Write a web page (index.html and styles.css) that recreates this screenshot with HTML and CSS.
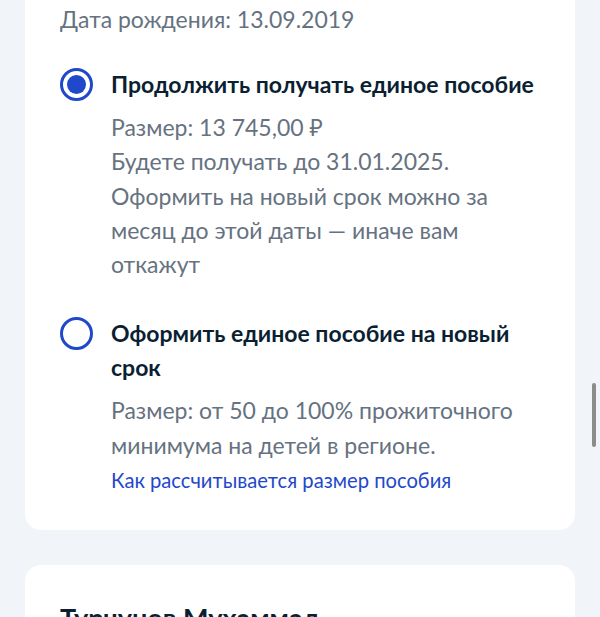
FILE: index.html
```html
<!DOCTYPE html>
<html lang="ru">
  <head>
    <meta charset="UTF-8" />
    <meta name="viewport" content="width=device-width, initial-scale=1.0" />
    <title>Единое пособие</title>
    <link rel="stylesheet" href="styles.css">
  </head>
  <body>
    <div class="page">
      <div class="card">
        <div class="birth">Дата рождения: 13.09.2019</div>

        <label class="option">
          <span class="radio radio-checked"></span>
          <span class="option-body">
            <span class="option-title">Продолжить получать единое пособие</span>
            <span class="option-desc">
              Размер: 13 745,00 ₽<br />
              Будете получать до 31.01.2025.<br />
              Оформить на новый срок можно за месяц до этой даты — иначе вам откажут
            </span>
          </span>
        </label>

        <label class="option">
          <span class="radio"></span>
          <span class="option-body">
            <span class="option-title">Оформить единое пособие на новый срок</span>
            <span class="option-desc">
              Размер: от 50 до 100% прожиточного минимума на детей в регионе.
            </span>
            <a class="option-link" href="#">Как рассчитывается размер пособия</a>
          </span>
        </label>
      </div>

      <div class="card card-next">
        <div class="person">Турчунов Мухаммад</div>
      </div>
    </div>
    <div class="scrollbar"></div>
  </body>
</html>
```

FILE: styles.css
```css
body {
  font-family: Lato, "Noto Sans", sans-serif;
  margin: 0;
  background-color: #f1f4f8;
  overflow: hidden;
}

.page {
  display: flex;
  flex-direction: column;
  gap: 35px;
  padding: 0 25px;
  margin-top: -20px;
}

.card {
  background-color: #fff;
  border-radius: 16px;
  padding: 22px 35px 33px;
}

.birth {
  font-size: 23px;
  line-height: 34px;
  color: #66727f;
}

.option {
  display: grid;
  grid-template-columns: 33px 1fr;
  column-gap: 18px;
  margin-top: 31px;
  cursor: pointer;
}

.option + .option {
  margin-top: 35px;
}

.radio {
  width: 33px;
  height: 33px;
  box-sizing: border-box;
  border: 3px solid #1f48cb;
  border-radius: 50%;
  margin-top: 1px;
  position: relative;
}

.radio-checked::after {
  content: "";
  position: absolute;
  top: 4px;
  left: 4px;
  width: 19px;
  height: 19px;
  border-radius: 50%;
  background-color: #1f48cb;
}

.option-body {
  display: flex;
  flex-direction: column;
  align-items: flex-start;
}

.option-title {
  font-size: 23px;
  line-height: 34px;
  font-weight: 700;
  color: #0b1f33;
}

.option-desc {
  margin-top: 9px;
  font-size: 23px;
  line-height: 34.3px;
  color: #66727f;
}

.option-link {
  margin-top: 1px;
  font-size: 20.2px;
  line-height: 34px;
  color: #1f48cb;
  text-decoration: none;
}

.card-next {
  padding-top: 36px;
  height: 200px;
}

.person {
  font-size: 27px;
  line-height: 34px;
  font-weight: 700;
  color: #0b1f33;
}

.scrollbar {
  position: fixed;
  right: 4px;
  top: 383px;
  width: 4px;
  height: 64px;
  border-radius: 2px;
  background-color: #8c8c8c;
}
```
